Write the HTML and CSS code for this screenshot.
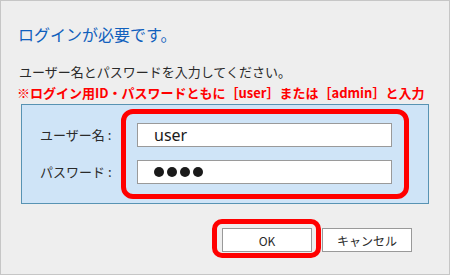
FILE: index.html
```html
<!DOCTYPE html>
<html lang="ja">
<head>
<meta charset="utf-8">
<link rel="stylesheet" href="styles.css">
</head>
<body>
<div class="dialog">
  <h1 class="title">ログインが必要です。</h1>
  <p class="intro">ユーザー名とパスワードを入力してください。</p>
  <p class="note">※ログイン用ID・パスワードともに［user］または［admin］と入力</p>
  <div class="panel">
    <div class="form">
      <label class="label">ユーザー名 :</label>
      <div class="input"><span class="value">user</span></div>
      <label class="label">パスワード :</label>
      <div class="input"><span class="dots"><i></i><i></i><i></i><i></i></span></div>
    </div>
    <div class="mark mark-fields"></div>
  </div>
  <div class="buttons">
    <div class="btn-wrap">
      <button class="btn">OK</button>
      <div class="mark mark-ok"></div>
    </div>
    <button class="btn">キャンセル</button>
  </div>
</div>
</body>
</html>
```
FILE: styles.css
```css
* { box-sizing: border-box; }
html, body { margin: 0; padding: 0; }
body {
  font-family: "Noto Sans CJK JP", "Noto Sans", sans-serif;
  background: #eeeeee;
}
.dialog {
  width: 450px;
  height: 275px;
  border: 1px solid #c6c6c6;
  background: #eeeeee;
  padding: 23px 0 0 0;
  color: #333333;
}
.title {
  margin: 0 0 0 17px;
  font-size: 16px;
  line-height: 20px;
  font-weight: normal;
  color: #1060bd;
}
.intro {
  margin: 19px 0 0 18px;
  font-size: 13px;
  line-height: 18px;
  color: #2a2a2a;
}
.note {
  margin: 3px 0 0 16px;
  font-size: 13px;
  line-height: 18px;
  font-weight: bold;
  color: #ff0000;
  white-space: nowrap;
}
.panel {
  position: relative;
  margin: 2px 0 0 20px;
  width: 408px;
  height: 100px;
  background: #cfe4f7;
  border: 1px solid #5893b3;
  padding: 18px 0 0 18px;
}
.form {
  display: grid;
  grid-template-columns: 97px 255px;
  grid-auto-rows: 24px;
  row-gap: 13px;
  align-items: center;
}
.label {
  font-size: 13px;
  line-height: 18px;
  color: #2a2a2a;
}
.input {
  height: 24px;
  background: #ffffff;
  border: 1px solid #9a9a9a;
  display: flex;
  align-items: center;
  padding-left: 16px;
}
.value {
  font-family: "Noto Sans", sans-serif;
  font-size: 16px;
  line-height: 20px;
  color: #1a1a1a;
}
.dots { display: flex; gap: 3px; }
.dots i {
  display: block;
  width: 10px;
  height: 10px;
  border-radius: 50%;
  background: #1a1a1a;
}
.mark {
  position: absolute;
  border: 5px solid #ff0000;
  border-radius: 12px;
  pointer-events: none;
}
.mark-fields {
  left: 99px;
  top: 4px;
  width: 288px;
  height: 90px;
}
.buttons {
  display: flex;
  gap: 10px;
  margin: 24px 0 0 221px;
}
.btn-wrap { position: relative; }
.btn {
  display: block;
  width: 90px;
  height: 24px;
  background: #ffffff;
  border: 1px solid #999999;
  border-radius: 0;
  font-family: "Noto Sans CJK JP", sans-serif;
  font-size: 12px;
  color: #2a2a2a;
  padding: 0;
}
.mark-ok {
  left: -10px;
  top: -9px;
  width: 109px;
  height: 39px;
  border-radius: 10px;
}
```
